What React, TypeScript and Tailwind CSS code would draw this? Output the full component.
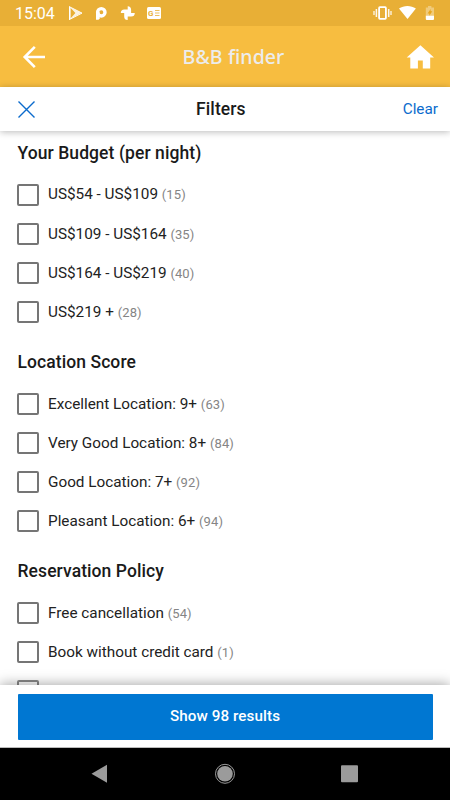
type Option = {
  label: string
  count: number
}

type Group = {
  title: string
  options: Option[]
}

const groups: Group[] = [
  {
    title: 'Your Budget (per night)',
    options: [
      { label: 'US$54 - US$109', count: 15 },
      { label: 'US$109 - US$164', count: 35 },
      { label: 'US$164 - US$219', count: 40 },
      { label: 'US$219 +', count: 28 },
    ],
  },
  {
    title: 'Location Score',
    options: [
      { label: 'Excellent Location: 9+', count: 63 },
      { label: 'Very Good Location: 8+', count: 84 },
      { label: 'Good Location: 7+', count: 92 },
      { label: 'Pleasant Location: 6+', count: 94 },
    ],
  },
  {
    title: 'Reservation Policy',
    options: [
      { label: 'Free cancellation', count: 54 },
      { label: 'Book without credit card', count: 1 },
    ],
  },
]

function StatusBar() {
  return (
    <div className="flex h-[26px] shrink-0 items-center bg-[#e8af36] pl-[15px] text-white">
      <span className="w-[53px] pt-[2px] text-[16px] leading-[26px]">15:04</span>
      <svg width="94" height="26" viewBox="68 0 94 26" fill="currentColor">
        <path d="M69 6.5v13.2l1.6-1V7.5z" />
        <path d="M70 7.2l11.2 5.9L70 19l5.4-5.900z" fillOpacity=".85" />
        <path d="M69 6.5l13 6.600-13 6.600" fill="none" stroke="currentColor" strokeWidth="1" />
        <circle cx="101.300" cy="12.300" r="3.700" fill="none" stroke="currentColor" strokeWidth="3.400" />
        <path d="M96 12.300h3.700v5.900l-1.200 1.500H96z" />
        <path d="M127.700 6.200a3.600 3.600 0 0 1 3.400 3.500v3.400h-3.400zM134.800 13.100a3.600 3.600 0 0 1-3.600 3.500h-3.500v-3.500zM127.700 20a3.600 3.600 0 0 1-3.500-3.600v-3.300h3.500zM120.800 13.100a3.600 3.600 0 0 1 3.500-3.600h3.400v3.600z" />
        <rect x="147" y="7" width="14" height="12" rx="1.500" />
        <path d="M155 10.500h4.500M155 13h4.500M155 15.500h4.500" stroke="#e8af36" strokeWidth=".8" />
        <text x="148" y="16" fontSize="8" fontWeight="700" fill="#e8af36" fontFamily="Roboto, sans-serif">
          G
        </text>
      </svg>
      <svg width="64" height="26" viewBox="372 0 64 26" fill="currentColor" className="mr-[14px] ml-auto">
        <rect x="379.100" y="7.100" width="6.800" height="11.800" rx=".8" fill="none" stroke="currentColor" strokeWidth="1.800" />
        <path d="M376.400 9v8M388.700 9v8" stroke="currentColor" strokeWidth="1.500" strokeOpacity=".9" />
        <path d="M374 11v4M391 11v4" stroke="currentColor" strokeWidth="1.300" strokeOpacity=".9" />
        <path d="M399 8.600c4.800-3.500 12-3.500 16.900 0L407.500 19z" />
        <path d="M428 6h3.400v1.500h2.600v8.700h-8.200V7.500h2.200z" fillOpacity=".35" />
        <path d="M425.800 15.800h8.200V19a1 1 0 0 1-1 1h-6.200a1 1 0 0 1-1-1z" />
        <path d="M430.600 9l-3 4.500h1.700v2.300l3-4.600h-1.700z" fill="#e8a51c" />
      </svg>
    </div>
  )
}

function Header() {
  return (
    <header className="flex h-[61px] shrink-0 items-center justify-between bg-[#f7bd40] pr-4 pl-[22px] text-white">
      <svg width="24" height="24" viewBox="0 0 24 24" fill="none" stroke="currentColor" strokeWidth="2.600">
        <path d="M23 12H3M12.800 1.900L2.700 12l10.100 10.100" />
      </svg>
      <h1 className="ml-[15px] pt-px font-['Noto_Sans'] text-[19.5px] font-medium tracking-[0.1px] text-[#ececec]">
        B&amp;B finder
      </h1>
      <svg width="28" height="26" viewBox="0 0 28 26" fill="currentColor">
        <path d="M14.400 1.200L28 13.400h-3.800v11.100h-7.400v-8h-4.900v8H4.300V13.400H.700z" />
      </svg>
    </header>
  )
}

function Toolbar() {
  return (
    <div className="z-10 flex h-11 shrink-0 items-center justify-between bg-white pr-3 pl-[18px] shadow-[0_1px_7px_rgba(0,0,0,0.28)]">
      <button className="w-[21px]">
        <svg width="17" height="17" viewBox="0 0 17 17" stroke="#0b6bcd" strokeWidth="1.400">
          <path d="M.5.5l16 16M16.5.5l-16 16" />
        </svg>
      </button>
      <h2 className="text-[17.5px] font-medium tracking-[0.1px] text-[#1a1a1a]">Filters</h2>
      <button className="pt-px text-[15.3px] text-[#0b6bcd]">Clear</button>
    </div>
  )
}

function FilterGroup({ title, options }: Group) {
  return (
    <section className="mb-[18.4px]">
      <h3 className="mb-[10.4px] pl-[0.5px] text-[17.5px] leading-6 font-medium tracking-[0.08px] text-[#1a1a1a]">
        {title}
      </h3>
      {options.map((option) => (
        <label key={option.label} className="flex h-[39.1px] items-center gap-[9px]">
          <span className="size-[22px] rounded-[2px] border-2 border-[#757575]" />
          <span className="text-[15.3px] text-[#222]">
            {option.label} <span className="text-[13px] tracking-[0.1px] text-[#858585]">({option.count})</span>
          </span>
        </label>
      ))}
    </section>
  )
}

function NavigationBar() {
  return (
    <nav className="flex h-[52px] shrink-0 items-center justify-center bg-black">
      <svg width="270" height="52" viewBox="90 748 270 52" fill="#9b9b9b">
        <path d="M107 764.800v18l-15.500-9z" />
        <circle cx="225" cy="773.800" r="7.800" />
        <circle cx="225" cy="773.800" r="9.500" fill="none" stroke="#9b9b9b" strokeWidth="1" />
        <rect x="341" y="765.300" width="17" height="17" rx="1" />
      </svg>
    </nav>
  )
}

export default function App() {
  return (
    <div className="flex h-[800px] w-[450px] flex-col overflow-hidden bg-white font-[Roboto,sans-serif]">
      <StatusBar />
      <Header />
      <Toolbar />
      <main className="min-h-0 flex-1 overflow-hidden pt-[10px] pl-[17px]">
        {groups.map((group) => (
          <FilterGroup key={group.title} {...group} />
        ))}
        <div className="-mt-[10px] size-[22px] rounded-[2px] border-2 border-[#8a8a8a]" />
      </main>
      <footer className="z-10 h-[63px] shrink-0 border-b border-[#bbb] bg-white px-[17.5px] pt-[9px] shadow-[0_-1px_12px_rgba(0,0,0,0.35)]">
        <button className="h-[45.5px] w-full rounded-[1px] bg-[#0077d2] text-[15.2px] font-medium tracking-[0.1px] text-white">
          Show 98 results
        </button>
      </footer>
      <NavigationBar />
    </div>
  )
}
